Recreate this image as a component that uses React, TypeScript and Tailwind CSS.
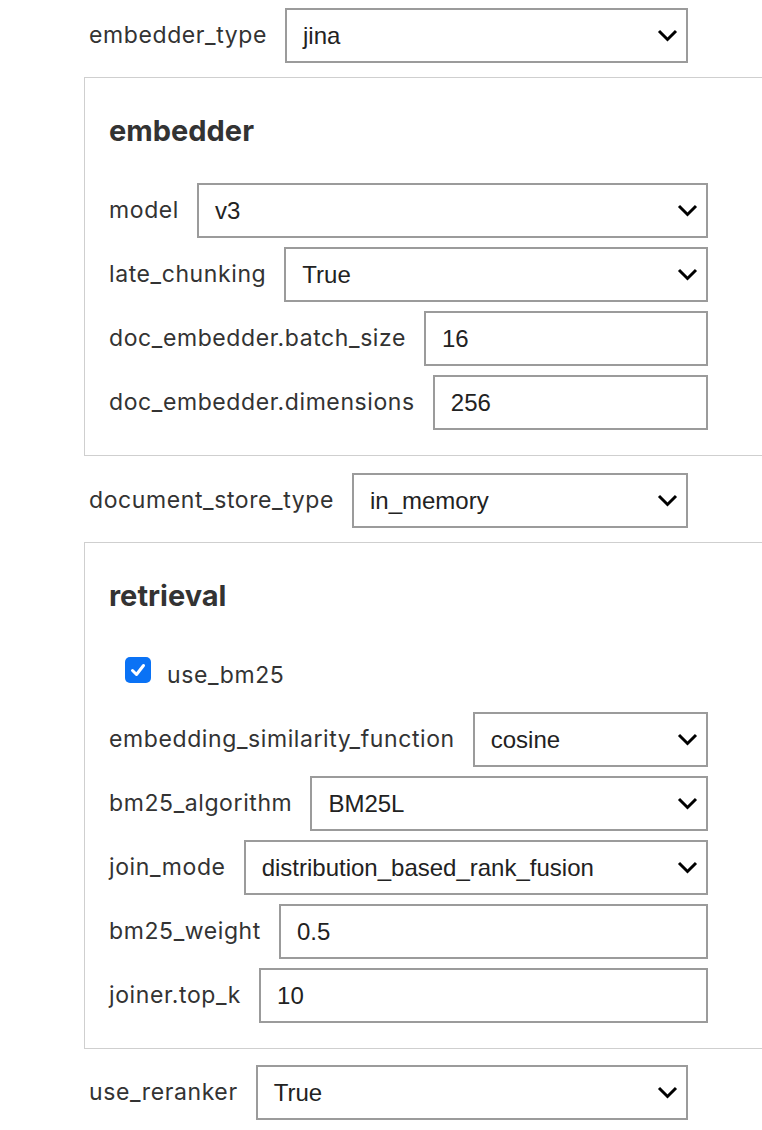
import React from "react";

const Chevron = () => (
  <svg width="21" height="13" viewBox="0 0 21 13" className="shrink-0">
    <polyline points="2,2 10.5,10.5 19,2" fill="none" stroke="#000" strokeWidth="3" />
  </svg>
);

type FieldProps = { label: string; value: string; select?: boolean };

const Field = ({ label, value, select }: FieldProps) => (
  <div className="flex h-[55px] w-[599px] items-center">
    <span className="mr-[18px] whitespace-nowrap text-[23px] tracking-[0.6px]">{label}</span>
    <div className="flex h-full flex-1 items-center border-2 border-[#9b9b9b] bg-white pl-[16px] pr-[8px]">
      <span className="flex-1 font-['Liberation_Sans',Arial,sans-serif] text-[24px] text-[#222]">{value}</span>
      {select && <Chevron />}
    </div>
  </div>
);

const Section = ({ title, children }: { title: string; children: React.ReactNode }) => (
  <div className="border border-r-0 border-[#cfcfcf] pl-6 pt-6 pb-[25px]">
    <h2 className="mb-[23px] h-[58px] text-[29px] leading-[58px] font-bold text-[#333]">{title}</h2>
    <div className="flex flex-col gap-[9px]">{children}</div>
  </div>
);

export default function App() {
  return (
    <div className="min-h-screen overflow-hidden bg-white pl-[84px] pt-2 font-['Inter','Noto_Sans',sans-serif] text-[#333]">
      <div className="ml-[5px]">
        <Field label="embedder_type" value="jina" select />
      </div>

      <div className="mt-[14px]">
        <Section title="embedder">
          <Field label="model" value="v3" select />
          <Field label="late_chunking" value="True" select />
          <Field label="doc_embedder.batch_size" value="16" />
          <Field label="doc_embedder.dimensions" value="256" />
        </Section>
      </div>

      <div className="mt-[17px] ml-[5px]">
        <Field label="document_store_type" value="in_memory" select />
      </div>

      <div className="mt-[14px]">
        <Section title="retrieval">
          <div className="flex h-[55px] items-start pl-4 pt-[9px]">
            <span className="flex h-[26px] w-[26px] items-center justify-center rounded-[5px] bg-[#0a72f5]">
              <svg width="18" height="18" viewBox="0 0 18 18">
                <polyline points="3.5,9.5 7.5,13.5 14.5,4.5" fill="none" stroke="#fff" strokeWidth="3" strokeLinecap="round" strokeLinejoin="round" />
              </svg>
            </span>
            <span className="ml-4 mt-[1px] text-[23px] tracking-[0.6px]">use_bm25</span>
          </div>
          <Field label="embedding_similarity_function" value="cosine" select />
          <Field label="bm25_algorithm" value="BM25L" select />
          <Field label="join_mode" value="distribution_based_rank_fusion" select />
          <Field label="bm25_weight" value="0.5" />
          <Field label="joiner.top_k" value="10" />
        </Section>
      </div>

      <div className="mt-[16px] ml-[5px] pb-3">
        <Field label="use_reranker" value="True" select />
      </div>
    </div>
  );
}
